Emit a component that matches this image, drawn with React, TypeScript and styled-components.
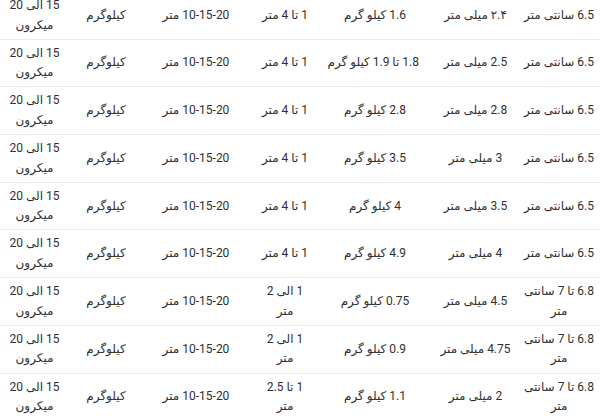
import styled, { createGlobalStyle } from "styled-components";

const GlobalStyle = createGlobalStyle`
  html, body {
    margin: 0;
    padding: 0;
    background: #fff;
    overflow: hidden;
  }
  body {
    font-family: Roboto, "DejaVu Sans", sans-serif;
    color: #333;
  }
`;

const Wrapper = styled.div`
  width: 600px;
  height: 420px;
  overflow: hidden;
`;

const Table = styled.table`
  width: 600px;
  margin-top: -8px;
  border-collapse: collapse;
  table-layout: fixed;
  direction: rtl;
`;

const Row = styled.tr`
  border-bottom: 1px solid #ececec;
`;

// $shift nudges the centred text sideways (positive = to the right)
const Cell = styled.td<{ $shift: number }>`
  padding-top: 4px;
  padding-bottom: 3.7px;
  padding-left: ${(p) => 4 + p.$shift}px;
  padding-right: ${(p) => 4 - p.$shift}px;
  height: 39px;
  text-align: center;
  vertical-align: middle;
  font-size: 12px;
  line-height: 19.5px;
  color: #2f2f2f;
`;

const Line = styled.span`
  display: block;
  white-space: nowrap;
`;

// column widths and text nudges, right to left
const columns = [
  { width: 82, shift: 0 },
  { width: 93, shift: 4 },
  { width: 96, shift: -2 },
  { width: 88, shift: 0 },
  { width: 90, shift: 0 },
  { width: 82, shift: -4 },
  { width: 69, shift: 0 },
];

type CellText = string | string[];

const rows: CellText[][] = [
  ["6.5 سانتی متر", "۲.۴ میلی متر", "1.6 کیلو گرم", "1 تا 4 متر"],
  ["6.5 سانتی متر", "2.5 میلی متر", "1.8 تا 1.9 کیلو گرم", "1 تا 4 متر"],
  ["6.5 سانتی متر", "2.8 میلی متر", "2.8 کیلو گرم", "1 تا 4 متر"],
  ["6.5 سانتی متر", "3 میلی متر", "3.5 کیلو گرم", "1 تا 4 متر"],
  ["6.5 سانتی متر", "3.5 میلی متر", "4 کیلو گرم", "1 تا 4 متر"],
  ["6.5 سانتی متر", "4 میلی متر", "4.9 کیلو گرم", "1 تا 4 متر"],
  [["6.8 تا 7 سانتی", "متر"], "4.5 میلی متر", "0.75 کیلو گرم", ["1 الی 2", "متر"]],
  [["6.8 تا 7 سانتی", "متر"], "4.75 میلی متر", "0.9 کیلو گرم", ["1 الی 2", "متر"]],
  [["6.8 تا 7 سانتی", "متر"], "2 میلی متر", "1.1 کیلو گرم", ["1 تا 2.5", "متر"]],
];

const tail: CellText[] = ["10-15-20 متر", "کیلوگرم", ["15 الی 20", "میکرون"]];

export default function App() {
  return (
    <Wrapper>
      <GlobalStyle />
      <Table dir="rtl">
        <colgroup>
          {columns.map((c, i) => (
            <col key={i} style={{ width: c.width }} />
          ))}
        </colgroup>
        <tbody>
          {rows.map((r, i) => (
            <Row key={i}>
              {[...r, ...tail].map((text, j) => (
                <Cell key={j} $shift={columns[j].shift}>
                  {(Array.isArray(text) ? text : [text]).map((line, k) => (
                    <Line key={k}>{line}</Line>
                  ))}
                </Cell>
              ))}
            </Row>
          ))}
        </tbody>
      </Table>
    </Wrapper>
  );
}
